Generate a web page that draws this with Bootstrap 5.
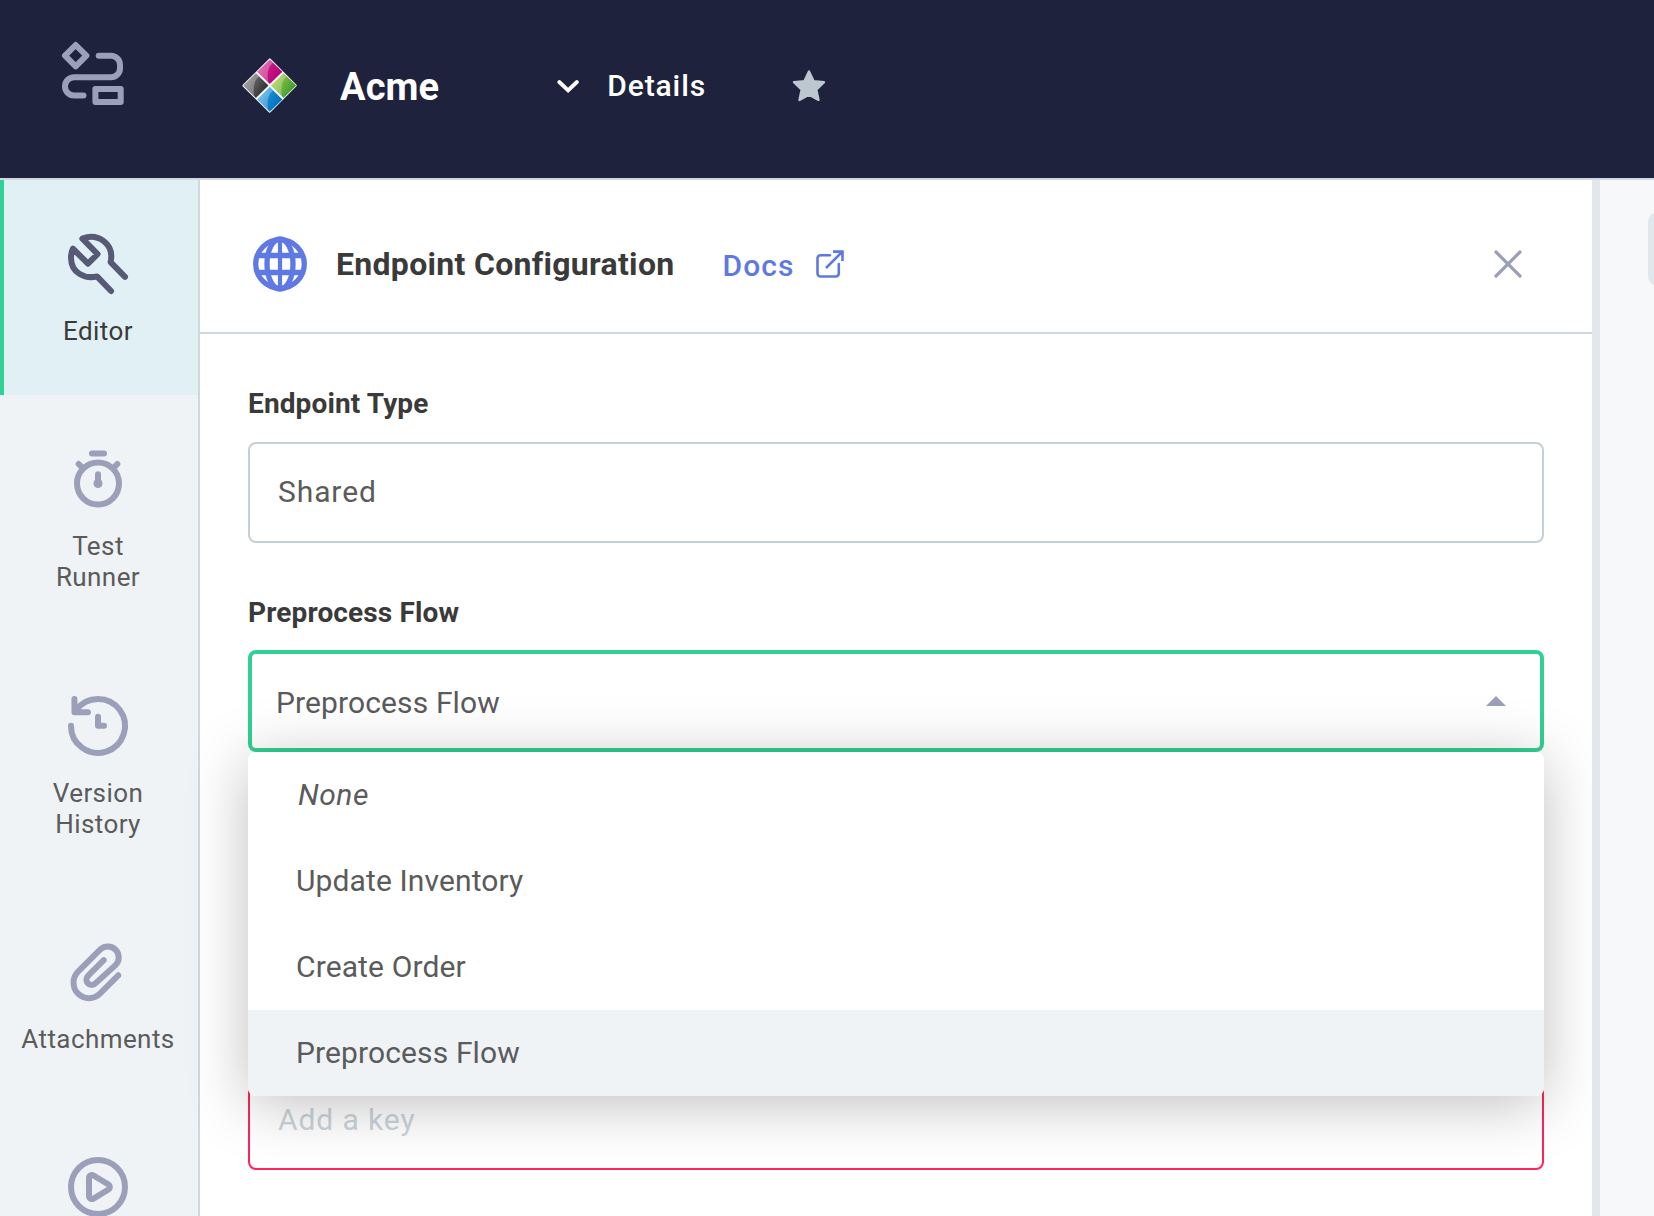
<!DOCTYPE html>
<html lang="en">
<head>
<meta charset="utf-8">
<title>Acme - Endpoint Configuration</title>
<link href="https://cdn.jsdelivr.net/npm/bootstrap@5.3.0/dist/css/bootstrap.min.css" rel="stylesheet">
<style>
body{font-family:Roboto,"Liberation Sans",sans-serif;height:1216px;overflow:hidden;color:#5b5b5b;background:#fff}
svg{display:block;flex:none}
.topbar{height:180px;background:#1f223c;border-bottom:2px solid #d0d8df;padding-bottom:6px!important}
.flow-logo{margin:41px 0 0 61px}
.brand-logo{margin-left:116px}
.brand-name{font-size:38px;font-weight:700;letter-spacing:.1px;line-height:1;margin:1px 0 0 41px}
.details-btn{font-size:30px;font-weight:500;letter-spacing:.9px;line-height:1;margin-left:118px}
.details-btn svg{margin-right:28px}
.fav{margin-left:86px}
.shell{height:1036px;overflow:hidden}
.side{width:200px;background:#eff3f6;border-right:2px solid #d0d8df}
.side-item{padding:48px 2px 48px 0;font-size:26px;line-height:31.2px;letter-spacing:.42px;color:#5b5b5b;text-align:center;text-decoration:none}
.side-item svg{margin:0 auto 16px;color:#9c9fba}
.side-item.active{background:#e1f0f5;color:#3a3a3a;box-shadow:inset 4px 0 #31d095}
.side-item.active svg{color:#565a76}
.panel{width:1392px;z-index:1}
.panel-head{height:154px;border-bottom:2px solid #d0d8df;padding:16px 70px 0 51px}
.panel-title{font-size:32px;font-weight:700;letter-spacing:.3px;color:#3a3a3a;margin:0 0 0 27px;line-height:1.2}
.docs{font-size:30px;font-weight:500;letter-spacing:1.1px;color:#5f79e3;margin:3px 0 0 48px;line-height:1}
.docs svg{margin:-4px 0 0 20px}
.panel-body{padding:53px 48px 0}
.field-label{font-size:28px;font-weight:700;line-height:34px;letter-spacing:.13px;color:#3a3a3a}
.label-type{margin-bottom:21px}
.label-flow{margin:53px 0 20px}
.field{height:101px;border:2px solid #c5cfd8;border-radius:8px;padding:0 28px 2px;font-size:30px;letter-spacing:.9px;background:#fff}
.field.bad{border-color:#ff2459;margin-top:317px;padding-bottom:0;color:#cbd4da}
.field.open{height:102px;border:4px solid #31d095;padding:3px 34px 0 24px;letter-spacing:.12px}
.caret{border:10px solid transparent;border-top:0;border-bottom-color:#9c9fba;margin-top:-3px}
.menu-list{top:100%;left:0;width:1296px;border-radius:8px;overflow:hidden;background:#fff;z-index:5;box-shadow:0 8px 60px rgba(0,0,0,.25);font-size:30px;letter-spacing:.12px}
.menu-list>div{height:86px;padding:0 48px 1px}
.menu-list>.none-row{padding-left:50px;letter-spacing:.5px}
.menu-list>.chosen{background:#eff3f6}
.rail{width:8px;background:#e1e7eb;z-index:2}
.canvas{background:#f6f8fa;z-index:2;padding-top:32px}
.canvas-tab{width:60px;height:74px;border-radius:10px;background:#e1e7eb;margin-left:48px}
</style>
</head>
<body>
<header class="topbar d-flex align-items-center text-white">
  <svg class="flow-logo align-self-start" width="64" height="66" viewBox="61 41 64 66" fill="none" stroke="#9c9fba" stroke-width="6" stroke-linecap="round" stroke-linejoin="round"><path d="M75.7 45l10.7 10.7-10.7 10.7L65 55.7z"/><path d="M98.7 55.7H111a9 9 0 0 1 9 9v3.6a9 9 0 0 1-9 9H74.1a9.1 9.1 0 0 0 0 18.2H83.5"/><path d="M95.4 89.1h25.3v12.8H95.4z"/></svg>
  <svg class="brand-logo" width="58" height="58" viewBox="241 57 58 58">
    <defs>
      <linearGradient id="gp" x1="0" y1="0" x2="1" y2=".6"><stop offset=".1" stop-color="#d8409b"/><stop offset=".6" stop-color="#c2127f"/><stop offset="1" stop-color="#b8007c"/></linearGradient>
      <linearGradient id="gk" x1="0" y1="0" x2="1" y2=".6"><stop offset=".1" stop-color="#8a8a8c"/><stop offset=".5" stop-color="#5c5c5e"/><stop offset="1" stop-color="#2e2e2e"/></linearGradient>
      <linearGradient id="gg" x1="0" y1="0" x2="1" y2=".6"><stop offset=".1" stop-color="#b4d21e"/><stop offset=".55" stop-color="#70b43c"/><stop offset="1" stop-color="#38982f"/></linearGradient>
      <linearGradient id="gb" x1="0" y1="0" x2="1" y2=".6"><stop offset=".1" stop-color="#4fb4e6"/><stop offset=".55" stop-color="#1288cf"/><stop offset="1" stop-color="#0070b8"/></linearGradient>
      <path id="gloss" d="M-12.4 0L0-12.2l3.2 3.2C-1.2-5.5-3.2 0-1.6 10.6z" fill="#fff" fill-opacity=".28"/>
    </defs>
    <path d="M269.8 59.5L295.6 85.6 269.8 111.6 243.6 85.6z" fill="#fff" stroke="#fff" stroke-width="2.2" stroke-linejoin="round"/>
    <g transform="translate(269.8 71.8)"><path d="M0-12.3L12.6 0 0 12.3-12.6 0z" fill="url(#gp)"/><use href="#gloss"/></g>
    <g transform="translate(255.9 85.6)"><path d="M0-12.3L12.6 0 0 12.3-12.6 0z" fill="url(#gk)"/><use href="#gloss"/></g>
    <g transform="translate(283.6 85.6)"><path d="M0-12.3L12.6 0 0 12.3-12.6 0z" fill="url(#gg)"/><use href="#gloss"/></g>
    <g transform="translate(269.8 99.4)"><path d="M0-12.3L12.6 0 0 12.3-12.6 0z" fill="url(#gb)"/><use href="#gloss"/></g>
  </svg>
  <span class="brand-name">Acme</span>
  <div class="details-btn d-flex align-items-center"><svg width="22" height="16" viewBox="557 78 22 16" fill="none" stroke="#fff" stroke-width="3.8" stroke-linecap="round"><path d="M559.3 82l8.8 8.3 8.8-8.3"/></svg>Details</div>
  <svg class="fav" width="34" height="34" viewBox="793 69 34 34" fill="#bcc7cf" stroke="#bcc7cf" stroke-width="2.4" stroke-linejoin="round"><path d="M810 71.6l4.5 9.5 10.5 1.1-7.7 7.4 2.2 10.3-9.5-5.1-9.5 5.1 2.2-10.3-7.7-7.4 10.5-1.1z"/></svg>
</header>
<div class="shell d-flex">
  <nav class="side flex-shrink-0 d-flex flex-column">
    <a class="side-item active"><svg width="72" height="72" viewBox="0 0 24 24" fill="none" stroke="currentColor" stroke-width="2" stroke-linecap="round" stroke-linejoin="round"><path d="M16.35 21l-4.7-4.85C7.8 17 3 15.2 3 9.8 3 8.8 3.2 7.8 3.65 6.9l5 5 3.2-3.2L6.8 3.55C11.8 1.6 17.6 5.1 16.2 11.4L21 16.3"/></svg>Editor</a>
    <a class="side-item"><svg width="72" height="72" viewBox="0 0 24 24" fill="none" stroke="currentColor" stroke-width="2" stroke-linecap="round"><circle cx="12" cy="13.5" r="7"/><path d="M10 3.5h4M5.55 7l1.2 1.2M18.45 7l-1.2 1.2M12 10.4v3"/><circle cx="12" cy="13.5" r="1.5" fill="currentColor" stroke="none"/></svg>Test<br>Runner</a>
    <a class="side-item"><svg width="72" height="72" viewBox="0 0 24 24" fill="none" stroke="currentColor" stroke-width="2" stroke-linecap="round" stroke-linejoin="round"><path d="M3 11.9a9 9 0 1 0 1.7-5.2M4.15 3v4.45h4.5M12 8.95v3h2"/></svg>Version<br>History</a>
    <a class="side-item"><svg width="72" height="72" viewBox="0 0 24 24" fill="none" stroke="currentColor" stroke-width="2" stroke-linecap="round"><path d="M18.75 13.1L12.65 19.2A5.15 5.15 0 0 1 5.35 11.9L12.85 4.4A3.65 3.65 0 0 1 18 9.55L11.15 15.8A1.75 1.75 0 0 1 8.65 13.3L13.9 8.05"/></svg>Attachments</a>
    <a class="side-item"><svg width="72" height="72" viewBox="0 0 24 24" fill="none" stroke="currentColor" stroke-width="2" stroke-linejoin="round"><circle cx="12" cy="12" r="9"/><path d="M9 9v6a1 1 0 0 0 1.5.85l5-3a1 1 0 0 0 0-1.7l-5-3A1 1 0 0 0 9 9z"/></svg></a>
  </nav>
  <main class="panel flex-shrink-0 position-relative">
    <div class="panel-head d-flex align-items-center">
      <svg width="58" height="58" viewBox="-29 -29 58 58" fill="none" stroke="#5f79e3" stroke-width="5.3"><circle r="24.3"/><ellipse rx="13" ry="25"/><path d="M-23-8.5h46M-23 8.5h46"/><path d="M0-24v48" stroke-width="4.2"/></svg>
      <h1 class="panel-title">Endpoint Configuration</h1>
      <div class="docs d-flex align-items-center">Docs<svg width="30" height="30" viewBox="0 0 30 30" fill="none" stroke="#5f79e3" stroke-width="2.6" stroke-linejoin="round"><path d="M15 6.2H5.5a3 3 0 0 0-3 3v15.3a3 3 0 0 0 3 3h15.3a3 3 0 0 0 3-3V15" stroke-linecap="round"/><path d="M11 19L27 3M18 2.6h9.5v9.5" stroke-linejoin="miter"/></svg></div>
      <svg class="ms-auto" width="28" height="28" viewBox="0 0 28 28" stroke="#9c9fba" stroke-width="3.2" stroke-linecap="round"><path d="M2 2l24 24M26 2L2 26"/></svg>
    </div>
    <div class="panel-body">
      <div class="field-label label-type">Endpoint Type</div>
      <div class="field d-flex align-items-center">Shared</div>
      <div class="field-label label-flow">Preprocess Flow</div>
      <div class="position-relative">
        <div class="field open d-flex align-items-center justify-content-between">Preprocess Flow<i class="caret"></i></div>
        <div class="menu-list position-absolute">
          <div class="none-row d-flex align-items-center fst-italic">None</div>
          <div class="d-flex align-items-center">Update Inventory</div>
          <div class="d-flex align-items-center">Create Order</div>
          <div class="chosen d-flex align-items-center">Preprocess Flow</div>
        </div>
      </div>
      <div class="field bad d-flex align-items-center">Add a key</div>
    </div>
  </main>
  <div class="rail flex-shrink-0"></div>
  <div class="canvas flex-grow-1 overflow-hidden position-relative"><div class="canvas-tab"></div></div>
</div>
<script src="https://cdn.jsdelivr.net/npm/bootstrap@5.3.0/dist/js/bootstrap.bundle.min.js"></script>
</body>
</html>
